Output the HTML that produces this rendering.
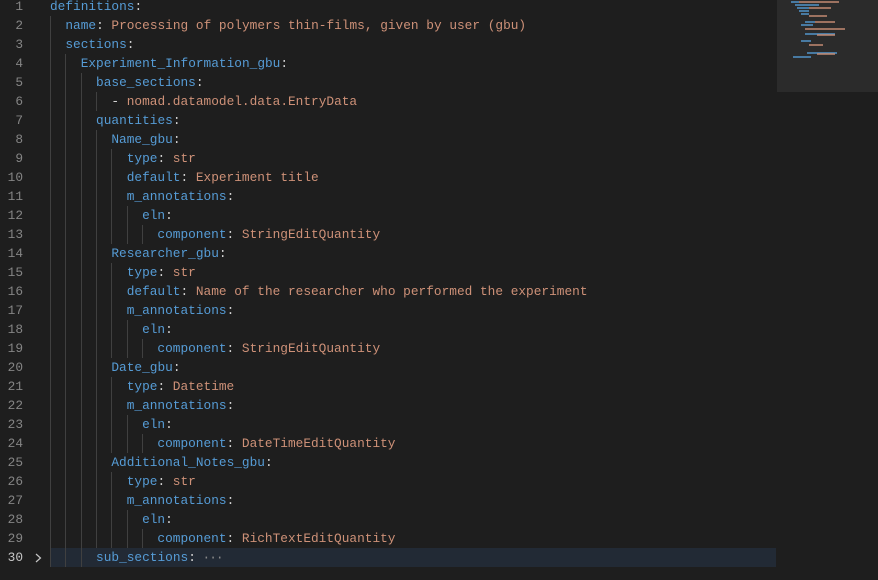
<!DOCTYPE html>
<html><head><style>
html,body{margin:0;padding:0;background:#1e1e1e;width:878px;height:580px;overflow:hidden}
.ed{position:absolute;left:0;top:-3px;font-family:"Liberation Mono",monospace;font-size:12.8px;}
.l{height:19px;line-height:19px;position:relative;white-space:pre}
.n{position:absolute;left:0;width:23px;text-align:right;color:#858585}
.c{position:absolute;left:50px;color:#d4d4d4}
.g{display:inline-block;width:2ch;height:19px;vertical-align:top;box-shadow:inset 1px 0 0 #404040}
.k{color:#569cd6}.s{color:#ce9178}
.cur{background:#222a35;position:absolute;left:50px;width:726px;height:19px}
.mm{position:absolute;left:777px;top:0;width:101px;height:92px;background:#2b2b2b}
.mm i{position:absolute;height:1.5px;opacity:.7}
</style></head><body>
<div class="mm">
<i style="left:14px;top:1px;width:8px;background:#569cd6"></i><i style="left:22px;top:1px;width:40px;background:#ce9178"></i>
<i style="left:18px;top:4px;width:24px;background:#569cd6"></i>
<i style="left:20px;top:7px;width:12px;background:#569cd6"></i><i style="left:32px;top:7px;width:22px;background:#ce9178"></i>
<i style="left:22px;top:10px;width:10px;background:#569cd6"></i>
<i style="left:24px;top:13px;width:8px;background:#569cd6"></i><i style="left:32px;top:15px;width:18px;background:#ce9178"></i>
<i style="left:28px;top:21px;width:10px;background:#569cd6"></i><i style="left:38px;top:21px;width:20px;background:#ce9178"></i>
<i style="left:24px;top:24px;width:12px;background:#569cd6"></i>
<i style="left:28px;top:28px;width:40px;background:#ce9178"></i>
<i style="left:28px;top:33px;width:30px;background:#569cd6"></i><i style="left:40px;top:34px;width:18px;background:#ce9178"></i>
<i style="left:24px;top:40px;width:10px;background:#569cd6"></i><i style="left:32px;top:44px;width:14px;background:#ce9178"></i>
<i style="left:30px;top:52px;width:30px;background:#569cd6"></i><i style="left:40px;top:53px;width:18px;background:#ce9178"></i>
<i style="left:16px;top:56px;width:18px;background:#569cd6"></i>
</div>
<div class="cur" style="top:548px"></div>
<div class="ed">
<div class="l"><span class="n">1</span><span class="c"><span class="k">definitions</span>:</span></div>
<div class="l"><span class="n">2</span><span class="c"><span class="g"></span><span class="k">name</span>: <span class="s">Processing of polymers thin-films, given by user (gbu)</span></span></div>
<div class="l"><span class="n">3</span><span class="c"><span class="g"></span><span class="k">sections</span>:</span></div>
<div class="l"><span class="n">4</span><span class="c"><span class="g"></span><span class="g"></span><span class="k">Experiment_Information_gbu</span>:</span></div>
<div class="l"><span class="n">5</span><span class="c"><span class="g"></span><span class="g"></span><span class="g"></span><span class="k">base_sections</span>:</span></div>
<div class="l"><span class="n">6</span><span class="c"><span class="g"></span><span class="g"></span><span class="g"></span><span class="g"></span>- <span class="s">nomad.datamodel.data.EntryData</span></span></div>
<div class="l"><span class="n">7</span><span class="c"><span class="g"></span><span class="g"></span><span class="g"></span><span class="k">quantities</span>:</span></div>
<div class="l"><span class="n">8</span><span class="c"><span class="g"></span><span class="g"></span><span class="g"></span><span class="g"></span><span class="k">Name_gbu</span>:</span></div>
<div class="l"><span class="n">9</span><span class="c"><span class="g"></span><span class="g"></span><span class="g"></span><span class="g"></span><span class="g"></span><span class="k">type</span>: <span class="s">str</span></span></div>
<div class="l"><span class="n">10</span><span class="c"><span class="g"></span><span class="g"></span><span class="g"></span><span class="g"></span><span class="g"></span><span class="k">default</span>: <span class="s">Experiment title</span></span></div>
<div class="l"><span class="n">11</span><span class="c"><span class="g"></span><span class="g"></span><span class="g"></span><span class="g"></span><span class="g"></span><span class="k">m_annotations</span>:</span></div>
<div class="l"><span class="n">12</span><span class="c"><span class="g"></span><span class="g"></span><span class="g"></span><span class="g"></span><span class="g"></span><span class="g"></span><span class="k">eln</span>:</span></div>
<div class="l"><span class="n">13</span><span class="c"><span class="g"></span><span class="g"></span><span class="g"></span><span class="g"></span><span class="g"></span><span class="g"></span><span class="g"></span><span class="k">component</span>: <span class="s">StringEditQuantity</span></span></div>
<div class="l"><span class="n">14</span><span class="c"><span class="g"></span><span class="g"></span><span class="g"></span><span class="g"></span><span class="k">Researcher_gbu</span>:</span></div>
<div class="l"><span class="n">15</span><span class="c"><span class="g"></span><span class="g"></span><span class="g"></span><span class="g"></span><span class="g"></span><span class="k">type</span>: <span class="s">str</span></span></div>
<div class="l"><span class="n">16</span><span class="c"><span class="g"></span><span class="g"></span><span class="g"></span><span class="g"></span><span class="g"></span><span class="k">default</span>: <span class="s">Name of the researcher who performed the experiment</span></span></div>
<div class="l"><span class="n">17</span><span class="c"><span class="g"></span><span class="g"></span><span class="g"></span><span class="g"></span><span class="g"></span><span class="k">m_annotations</span>:</span></div>
<div class="l"><span class="n">18</span><span class="c"><span class="g"></span><span class="g"></span><span class="g"></span><span class="g"></span><span class="g"></span><span class="g"></span><span class="k">eln</span>:</span></div>
<div class="l"><span class="n">19</span><span class="c"><span class="g"></span><span class="g"></span><span class="g"></span><span class="g"></span><span class="g"></span><span class="g"></span><span class="g"></span><span class="k">component</span>: <span class="s">StringEditQuantity</span></span></div>
<div class="l"><span class="n">20</span><span class="c"><span class="g"></span><span class="g"></span><span class="g"></span><span class="g"></span><span class="k">Date_gbu</span>:</span></div>
<div class="l"><span class="n">21</span><span class="c"><span class="g"></span><span class="g"></span><span class="g"></span><span class="g"></span><span class="g"></span><span class="k">type</span>: <span class="s">Datetime</span></span></div>
<div class="l"><span class="n">22</span><span class="c"><span class="g"></span><span class="g"></span><span class="g"></span><span class="g"></span><span class="g"></span><span class="k">m_annotations</span>:</span></div>
<div class="l"><span class="n">23</span><span class="c"><span class="g"></span><span class="g"></span><span class="g"></span><span class="g"></span><span class="g"></span><span class="g"></span><span class="k">eln</span>:</span></div>
<div class="l"><span class="n">24</span><span class="c"><span class="g"></span><span class="g"></span><span class="g"></span><span class="g"></span><span class="g"></span><span class="g"></span><span class="g"></span><span class="k">component</span>: <span class="s">DateTimeEditQuantity</span></span></div>
<div class="l"><span class="n">25</span><span class="c"><span class="g"></span><span class="g"></span><span class="g"></span><span class="g"></span><span class="k">Additional_Notes_gbu</span>:</span></div>
<div class="l"><span class="n">26</span><span class="c"><span class="g"></span><span class="g"></span><span class="g"></span><span class="g"></span><span class="g"></span><span class="k">type</span>: <span class="s">str</span></span></div>
<div class="l"><span class="n">27</span><span class="c"><span class="g"></span><span class="g"></span><span class="g"></span><span class="g"></span><span class="g"></span><span class="k">m_annotations</span>:</span></div>
<div class="l"><span class="n">28</span><span class="c"><span class="g"></span><span class="g"></span><span class="g"></span><span class="g"></span><span class="g"></span><span class="g"></span><span class="k">eln</span>:</span></div>
<div class="l"><span class="n">29</span><span class="c"><span class="g"></span><span class="g"></span><span class="g"></span><span class="g"></span><span class="g"></span><span class="g"></span><span class="g"></span><span class="k">component</span>: <span class="s">RichTextEditQuantity</span></span></div>
<div class="l"><span class="n" style="color:#c6c6c6">30</span><svg style="position:absolute;left:34px;top:5px" width="9" height="10" viewBox="0 0 9 10"><path d="M2 1l4.5 4L2 9" fill="none" stroke="#c5c5c5" stroke-width="1.2"/></svg><span class="c"><span class="g"></span><span class="g"></span><span class="g"></span><span class="k">sub_sections</span>:<span style="color:#8a8a8a;letter-spacing:-1px"> ···</span></span></div>
</div>
</body></html>
